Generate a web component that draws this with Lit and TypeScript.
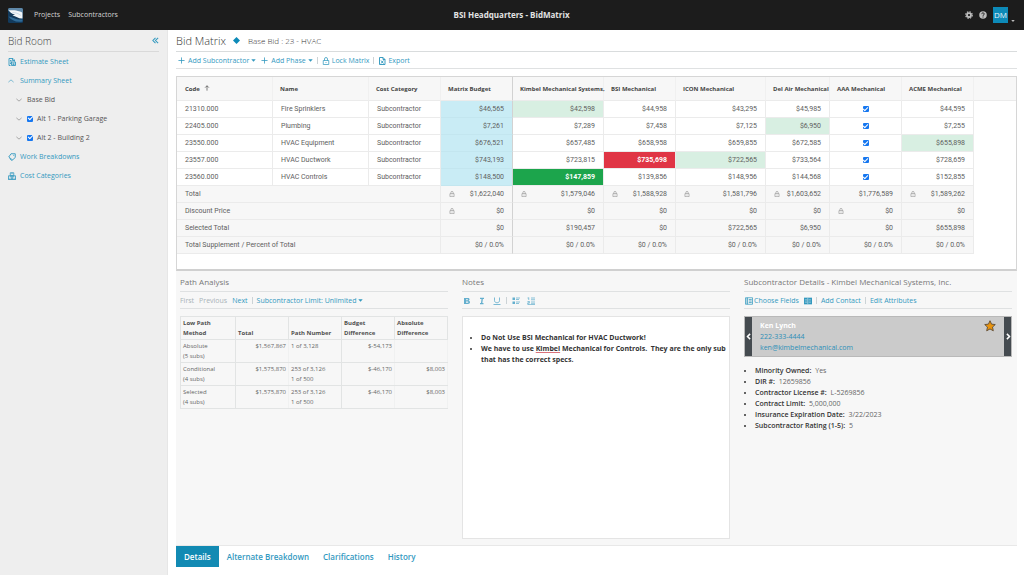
import { LitElement, html, css, svg, nothing, TemplateResult } from "lit";
import { customElement } from "lit/decorators.js";
import { classMap } from "lit/directives/class-map.js";

const icon = (body: TemplateResult, cls = "icon", box = "0 0 16 16") =>
  html`<svg class=${cls} viewBox=${box} aria-hidden="true">${body}</svg>`;

const sheetIcon = svg`<path d="M13 7V4L10 1H2v14h3M9 1v4h4M4 5h3M4 8h4M4 11h2" fill="none" stroke="currentColor" stroke-width="1.8"/><path d="M7 15V8h8v7zM9 10.500h4M9 13h4" fill="none" stroke="currentColor" stroke-width="1.800"/>`;
const exportIcon = svg`<path d="M3 1h7l4 4v10H3zM10 1v4h4" fill="none" stroke="currentColor" stroke-width="1.900"/><path d="M6 7l5 6M11 7l-5 6" stroke="currentColor" stroke-width="1.900"/>`;
const tagIcon = svg`<path d="M6 1.500h8.500V9L9 14 1.500 8z" fill="none" stroke="currentColor" stroke-width="1.800" stroke-linejoin="round"/><path d="M3 11l4 4 2-2" fill="none" stroke="currentColor" stroke-width="1.500"/><circle cx="11.500" cy="4.500" r="1" fill="currentColor"/>`;
const boxesIcon = svg`<path d="M4.500 1.500h7v6h-7zM1 7.500h7v7H1zM8 7.500h7v7H8z" fill="none" stroke="currentColor" stroke-width="1.600"/><path d="M8 1.500v3M4.500 8v3M11.500 8v3M0 14.500h16" stroke="currentColor" stroke-width="1.600"/>`;
const upIcon = svg`<path d="M1 11l7-6 7 6" fill="none" stroke="currentColor" stroke-width="1.600"/>`;
const downIcon = svg`<path d="M1 5l7 6 7-6" fill="none" stroke="currentColor" stroke-width="1.600"/>`;
const collapseIcon = svg`<path d="M8 2L2 8l6 6M14 2L8 8l6 6" fill="none" stroke="currentColor" stroke-width="2.400"/>`;
const plusIcon = svg`<path d="M8 1v14M1 8h14" stroke="currentColor" stroke-width="1.800"/>`;
const lockIcon = svg`<path d="M2.500 7h11v8h-11zM5 7V4a3 3 0 0 1 6 0v3" fill="none" stroke="currentColor" stroke-width="1.500"/><path d="M8 10v2" stroke="currentColor" stroke-width="1.500"/>`;
const caretIcon = svg`<path d="M1 4h14L8 12z" fill="currentColor"/>`;
const sortIcon = svg`<path d="M8 15V2M3 7l5-5 5 5" fill="none" stroke="currentColor" stroke-width="1.800"/>`;
const diamondIcon = svg`<path d="M8 0l8 8-8 8-8-8z" fill="currentColor"/>`;
const gearIcon = svg`<circle cx="8" cy="8" r="4" fill="none" stroke="currentColor" stroke-width="3.500"/><circle cx="8" cy="8" r="6.500" fill="none" stroke="currentColor" stroke-width="2.400" stroke-dasharray="3 2.100"/>`;
const helpIcon = svg`<circle cx="8" cy="8" r="7.500" fill="currentColor"/><path d="M5.500 6.200c0-3.400 5-3.200 5-.2 0 1.800-2.500 1.700-2.500 3.700M8 11v2" fill="none" stroke="#1c1c1c" stroke-width="1.900"/>`;
const logoIcon = svg`<rect width="30" height="30" rx="3" fill="#123a5c"/><path d="M0 3a3 3 0 0 1 3-3h24a3 3 0 0 1 3 3v6L0 5z" fill="#5f88a8"/><path d="M1 4c8 1 14-1 28 5v12C22 22 16 16 9 15l5-2C8 12 4 9 1 4z" fill="#f1f5f8"/><path d="M1 17c9 1 14 7 28 6v4C16 29 7 25 1 17z" fill="#2f6b98"/><path d="M9 9c6 0 12 2 17 6" stroke="#b7cfe0" stroke-width="1.200" fill="none"/>`;
const boldIcon = svg`<path d="M2 2h8c4 0 4 5 1 5.500C15.500 8 15 14 10 14H2zM6 4.500v2h3c1.500 0 1.500-2 0-2zM6 9v2.500h3.500c1.800 0 1.800-2.500 0-2.500z" fill="currentColor" fill-rule="evenodd"/>`;
const italicIcon = svg`<path d="M4 1.500h8v2.500h-2.300l-1 8H11v2.500H4V12h2l1-8H4z" fill="currentColor"/>`;
const underlineIcon = svg`<path d="M3 1v6c0 6 10 6 10 0V1M1 15h14" fill="none" stroke="currentColor" stroke-width="1.700"/>`;
const bulletsIcon = svg`<path d="M1 1h5v5H1zM1 9h5v5H1z" fill="currentColor"/><path d="M8 2h8M8 5h6M8 10h8M8 13h6" stroke="currentColor" stroke-width="1.500"/>`;
const numbersIcon = svg`<path d="M3.500 1v5M1 2h2.500M1 9h4v2.500H1.500V14H5M8 2h8M8 5.500h8M8 10h8M8 13.500h8M1 15.300h15" stroke="currentColor" stroke-width="1.500" fill="none"/>`;
const fieldsIcon = svg`<path d="M1 1.500h14v13H1zM5 1.500v13M7.500 5h6M7.500 8h6M7.500 11h6" fill="none" stroke="currentColor" stroke-width="1.500"/><path d="M2 4h2M2 8h2M2 12h2" stroke="currentColor" stroke-width="1.500"/>`;
const columnsIcon = svg`<path d="M0 1h18v15H0z" fill="currentColor"/><path d="M8.500 2v13M2 6h5M2 11h5M10.500 6h5M10.500 11h5" stroke="#f7f7f7" stroke-width="1.200"/>`;
const starIcon = svg`<path d="M10 1.200l2.600 5.700 6.200.7-4.600 4.200 1.300 6.200L10 14.900 4.500 18l1.300-6.200L1.200 7.600l6.200-.7z" fill="#e8930c" stroke="#5c4a33" stroke-width="1.500" stroke-linejoin="round"/>`;
const prevIcon = svg`<path d="M11 1L4 8l7 7" fill="none" stroke="currentColor" stroke-width="4"/>`;
const nextIcon = svg`<path d="M5 1l7 7-7 7" fill="none" stroke="currentColor" stroke-width="4"/>`;

const base = css`
  * { box-sizing: border-box; }
  button, a, input { font: inherit; }
  button { border: 0; padding: 0; margin: 0; background: none; color: inherit; cursor: pointer; }
  a { color: inherit; text-decoration: none; }
  h1, h2, h3, ul { margin: 0; padding: 0; }
  .icon { width: 8px; height: 8px; flex: none; display: block; }
  .tiny { width: 5px; height: 5px; flex: none; display: block; }
  .check { appearance: none; width: 6px; height: 6px; margin: 0; border-radius: 1px; background: #1677f0; display: grid; place-items: center; flex: none; }
  .check:checked::after { content: ""; width: 4px; height: 2px; border-left: 1px solid #fff; border-bottom: 1px solid #fff; transform: translateY(-1px) rotate(-45deg); }
  .toolbar { display: flex; align-items: center; height: 17px; padding-top: 1px; border-bottom: 1px solid #dfe1e2; color: #3399bf; white-space: nowrap; }
  .tool { display: flex; align-items: center; gap: 2px; }
  .sep { width: 1px; height: 7px; margin: 0 -1px; background: #ccd3d6; flex: none; }
`;

@customElement("top-bar")
export class TopBar extends LitElement {
  static styles = [base, css`
    :host { display: block; }
    .bar { display: grid; grid-template-columns: 1fr auto 1fr; align-items: center; height: 30px; padding: 0 9px 0 8px; background: #1c1c1c; color: #d4d4d4; }
    .left, .right { display: flex; align-items: center; gap: 8px; }
    .right { justify-content: flex-end; gap: 6px; color: #bdbdbd; }
    .logo { width: 15px; height: 15px; margin-right: 3px; }
    .title { font-size: 8px; font-weight: 700; color: #e2e2e2; }
    .user { display: flex; align-items: flex-end; gap: 3px; }
    .avatar { width: 15px; height: 16px; background: #0d8ab8; color: #e6f5fa; font-size: 8px; line-height: 16px; text-align: center; }
    .tiny { width: 4px; height: 4px; }
  `];
  render() {
    return html`<header class="bar">
      <nav class="left">${icon(logoIcon, "logo", "0 0 30 30")}<a href="#projects">Projects</a><a href="#subs">Subcontractors</a></nav>
      <h1 class="title">BSI Headquarters - BidMatrix</h1>
      <div class="right">
        <button aria-label="Settings">${icon(gearIcon)}</button>
        <button aria-label="Help">${icon(helpIcon)}</button>
        <button class="user"><span class="avatar">DM</span>${icon(caretIcon, "tiny")}</button>
      </div>
    </header>`;
  }
}

@customElement("side-nav")
export class SideNav extends LitElement {
  static styles = [base, css`
    :host { display: block; background: #eeeeee; padding: 0 8px; border-right: 1px solid #e6e6e6; }
    .head { display: flex; align-items: center; justify-content: space-between; height: 22px; border-bottom: 1px solid #d9d9d9; color: #3399bf; }
    .title { font-size: 10px; font-weight: 300; color: #444; }
    .fold { width: 7px; height: 7px; display: block; }
    .row { display: flex; align-items: center; gap: 4px; height: 19px; color: #3399bf; }
    .child { padding-left: 8px; color: #555; gap: 5px; }
    .child label { display: flex; align-items: center; gap: 4px; }
    .chev { width: 6px; height: 6px; display: block; }
    .row .wide { width: 8px; display: block; }
    .child button { color: #777; }
  `];
  render() {
    const chev = html`<button aria-label="Expand">${icon(downIcon, "chev")}</button>`;
    return html`
      <div class="head"><h2 class="title">Bid Room</h2><button aria-label="Collapse">${icon(collapseIcon, "fold")}</button></div>
      <nav>
        <a class="row" href="#estimate">${icon(sheetIcon)}Estimate Sheet</a>
        <a class="row" href="#summary"><span class="wide">${icon(upIcon, "chev")}</span>Summary Sheet</a>
        <div class="row child">${chev}<a href="#base">Base Bid</a></div>
        <div class="row child">${chev}<label><input class="check" type="checkbox" checked>Alt 1 - Parking Garage</label></div>
        <div class="row child">${chev}<label><input class="check" type="checkbox" checked>Alt 2 - Building 2</label></div>
        <a class="row" href="#work">${icon(tagIcon)}Work Breakdowns</a>
        <a class="row" href="#cost">${icon(boxesIcon)}Cost Categories</a>
      </nav>`;
  }
}

type Mark = "low" | "bad" | "good";
interface Cell { v?: string; mark?: Mark; lock?: boolean; check?: boolean; }
const c = (v: string, mark?: Mark): Cell => ({ v, mark });
const k = (v: string): Cell => ({ v, lock: true });
const tick: Cell = { check: true };

const vendors = ["Matrix Budget", "Kimbel Mechanical Systems,", "BSI Mechanical", "ICON Mechanical", "Del Air Mechanical", "AAA Mechanical", "ACME Mechanical"];
const lines: { code: string; name: string; cells: Cell[] }[] = [
  { code: "21310.000", name: "Fire Sprinklers", cells: [c("$46,565"), c("$42,598", "low"), c("$44,958"), c("$43,295"), c("$45,985"), tick, c("$44,595")] },
  { code: "22405.000", name: "Plumbing", cells: [c("$7,261"), c("$7,289"), c("$7,458"), c("$7,125"), c("$6,950", "low"), tick, c("$7,255")] },
  { code: "23550.000", name: "HVAC Equipment", cells: [c("$676,521"), c("$657,485"), c("$658,958"), c("$659,855"), c("$672,585"), tick, c("$655,898", "low")] },
  { code: "23557.000", name: "HVAC Ductwork", cells: [c("$743,193"), c("$723,815"), c("$735,698", "bad"), c("$722,565", "low"), c("$733,564"), tick, c("$728,659")] },
  { code: "23560.000", name: "HVAC Controls", cells: [c("$148,500"), c("$147,859", "good"), c("$139,856"), c("$148,956"), c("$144,568"), tick, c("$152,855")] },
];
const zero = "$0 / 0.0%";
const totals: { name: string; cells: Cell[] }[] = [
  { name: "Total", cells: [k("$1,622,040"), k("$1,579,046"), k("$1,588,928"), k("$1,581,796"), k("$1,603,652"), c("$1,776,589"), k("$1,589,262")] },
  { name: "Discount Price", cells: [k("$0"), c("$0"), c("$0"), c("$0"), c("$0"), k("$0"), c("$0")] },
  { name: "Selected Total", cells: [c("$0"), c("$190,457"), c("$0"), c("$722,565"), c("$6,950"), c("$0"), c("$655,898")] },
  { name: "Total Supplement / Percent of Total", cells: vendors.map(() => c(zero)) },
];

@customElement("bid-grid")
export class BidGrid extends LitElement {
  static styles = [base, css`
    :host { display: block; border: 1px solid #d6d6d6; border-bottom: 2px solid #d0d0d0; background: #fff; padding-bottom: 15px; overflow: hidden; font-family: Roboto, sans-serif; }
    table { width: 100%; table-layout: fixed; border-collapse: separate; border-spacing: 0; color: #606060; }
    .c-wide { width: 96px; }
    .c-mid { width: 72px; }
    .c-first { width: 91px; }
    .c-icon { width: 90px; }
    .c-del { width: 64px; }
    th, td { padding: 0 8px; white-space: nowrap; border-right: 1px solid #ebebeb; border-bottom: 1px solid #ebebeb; font-weight: 400; text-align: left; }
    thead th, thead td { height: 24px; background: #f7f7f7; font-family: "Open Sans", "Noto Sans", sans-serif; font-size: 6px; font-weight: 700; color: #444; padding: 0 0 0 7px; border-right-color: #f0f0f0; }
    thead th:first-child { padding-left: 8px; }
    tbody td, tbody th, tfoot td, tfoot th { height: 17px; }
    .num { text-align: right; }
    tfoot .num, tfoot th { background: #f7f7f7; }
    .budget, thead .budget { border-right-color: #d2d2d2; }
    tbody .budget { background: #c9ecf5; border-bottom-color: #c3e6ef; }
    .low { background: #d8efe2; }
    .bad { background: #e03545; color: #fff; font-weight: 700; }
    .good { background: #1ca54c; color: #fff; font-weight: 700; }
    .fill { border-right: 0; border-bottom: 0; }
    thead .fill { border-bottom: 1px solid #ebebeb; }
    .cell { display: flex; align-items: center; justify-content: space-between; }
    .lock { width: 6px; height: 6px; color: #888; }
    .mid .check { margin: 0 auto; }
    .sort { display: inline-block; width: 6px; height: 6px; margin-left: 4px; }
  `];
  private cell(x: Cell, i: number) {
    const cls = { num: !x.check, mid: !!x.check, budget: i === 0, low: x.mark === "low", bad: x.mark === "bad", good: x.mark === "good" };
    return html`<td class=${classMap(cls)}>${x.check
      ? html`<input class="check" type="checkbox" checked aria-label="Include ${vendors[i]}">`
      : x.lock ? html`<div class="cell">${icon(lockIcon, "lock")}<span>${x.v}</span></div>` : x.v}</td>`;
  }
  render() {
    return html`<table>
      <colgroup><col class="c-wide"><col class="c-wide"><col class="c-mid"><col class="c-mid"><col class="c-first"><col class="c-mid"><col class="c-icon"><col class="c-del"><col class="c-mid"><col class="c-mid"><col></colgroup>
      <thead><tr><th>Code${icon(sortIcon, "sort")}</th><th>Name</th><th>Cost Category</th>${vendors.map((v, i) => html`<th class=${i ? "" : "budget"}>${v}</th>`)}<td class="fill"></td></tr></thead>
      <tbody>${lines.map(l => html`<tr><td>${l.code}</td><td>${l.name}</td><td>Subcontractor</td>${l.cells.map((x, i) => this.cell(x, i))}<td class="fill"></td></tr>`)}</tbody>
      <tfoot>${totals.map(t => html`<tr><th colspan="3">${t.name}</th>${t.cells.map((x, i) => this.cell(x, i))}<td class="fill"></td></tr>`)}</tfoot>
    </table>`;
  }
}

const panel = css`
  .title { font-size: 8px; line-height: 11px; padding: 5px 0 4px; font-weight: 400; color: #777; border-bottom: 1px solid #dfe1e2; white-space: nowrap; }
`;

@customElement("path-analysis")
export class PathAnalysis extends LitElement {
  static styles = [base, panel, css`
    :host { display: block; min-width: 0; }
    .toolbar { gap: 5px; }
    .tool { gap: 1px; }
    .off { color: #a9b3b7; }
    table { width: 100%; margin-top: 7px; table-layout: fixed; border-collapse: collapse; font-size: 6px; line-height: 10px; color: #666; }
    th, td { border: 1px solid #e2e4e4; padding: 1px 2px; text-align: left; vertical-align: top; white-space: nowrap; }
    th { vertical-align: bottom; font-weight: 700; color: #505050; }
    .num { text-align: right; border-right-color: #f0f1f1; }
    .first { width: 55px; }
  `];
  render() {
    const rows = [
      ["Absolute", "(5 subs)", "$1,567,867", "1 of 3,128", "", "$-54,173", ""],
      ["Conditional", "(4 subs)", "$1,575,870", "253 of 3,126", "1 of 500", "$-46,170", "$8,003"],
      ["Selected", "(4 subs)", "$1,575,870", "253 of 3,126", "1 of 500", "$-46,170", "$8,003"],
    ];
    return html`<h3 class="title">Path Analysis</h3>
      <div class="toolbar"><button class="off" disabled>First</button><button class="off" disabled>Previous</button><button>Next</button><span class="sep"></span>
      <button class="tool">Subcontractor Limit: Unlimited${icon(caretIcon, "tiny")}</button></div>
      <table><thead><tr><th class="first">Low Path<br>Method</th><th>Total</th><th>Path Number</th><th>Budget<br>Difference</th><th>Absolute<br>Difference</th></tr></thead>
      <tbody>${rows.map(r => html`<tr><td>${r[0]}<br>${r[1]}</td><td class="num">${r[2]}</td><td>${r[3]}${r[4] ? html`<br>${r[4]}` : nothing}</td><td class="num">${r[5]}</td><td class="num">${r[6]}</td></tr>`)}</tbody></table>`;
  }
}

@customElement("notes-panel")
export class NotesPanel extends LitElement {
  static styles = [base, panel, css`
    :host { display: flex; flex-direction: column; min-width: 0; }
    .toolbar { gap: 7px; padding-left: 1px; color: #64afce; }
    .sep { margin: 0 -2px; }
    .editor { flex: 1; margin: 7px 0 6px; border: 1px solid #e4e4e4; background: #fff; padding: 15px 0 8px 18px; line-height: 11px; font-weight: 700; color: #333; }
    .editor ul { list-style: disc; }
    .typo { text-decoration: underline #d9737b; }
  `];
  render() {
    return html`<h3 class="title">Notes</h3>
      <div class="toolbar"><button aria-label="Bold">${icon(boldIcon)}</button><button aria-label="Italic">${icon(italicIcon)}</button><button aria-label="Underline">${icon(underlineIcon)}</button><span class="sep"></span><button aria-label="Bulleted list">${icon(bulletsIcon)}</button><button aria-label="Numbered list">${icon(numbersIcon)}</button></div>
      <div class="editor" role="textbox" aria-label="Notes" aria-multiline="true" contenteditable="true" spellcheck="false"><ul>
        <li>Do Not Use BSI Mechanical for HVAC Ductwork!</li>
        <li>We have to use <span class="typo">Kimbel</span> Mechanical for Controls.&nbsp; They are the only sub that has the correct specs.</li></ul></div>`;
  }
}

@customElement("sub-details")
export class SubDetails extends LitElement {
  static styles = [base, panel, css`
    :host { display: block; min-width: 0; }
    .toolbar { gap: 5px; padding-left: 1px; }
    .tool { gap: 1px; }
    .card { display: flex; margin-top: 7px; background: #cbcbcb; border: 1px solid #b9b9b9; line-height: 11px; color: #2b8fb8; }
    .side { width: 7px; background: #454b50; color: #fff; display: grid; place-items: center; }
    .side svg { width: 6px; height: 9px; }
    .who { flex: 1; display: flex; flex-direction: column; align-items: flex-start; padding: 3px 8px; }
    .name { color: #fff; font-weight: 700; }
    .star { width: 12px; height: 12px; margin: 3px 8px 0 0; }
    .facts { list-style: disc; margin-top: 8px; padding-left: 11px; line-height: 11px; color: #333; }
    b { font-weight: 600; color: #333; margin-right: 2px; }
    .facts span { color: #666; }
  `];
  render() {
    const facts = [["Minority Owned:", "Yes"], ["DIR #:", "12659856"], ["Contractor License #:", "L-5269856"], ["Contract Limit:", "5,000,000"], ["Insurance Expiration Date:", "3/22/2023"], ["Subcontractor Rating (1-5):", "5"]];
    return html`<h3 class="title">Subcontractor Details - Kimbel Mechanical Systems, Inc.</h3>
      <div class="toolbar"><button class="tool">${icon(fieldsIcon)}Choose Fields</button><button aria-label="Columns">${icon(columnsIcon, "icon", "0 0 18 17")}</button><span class="sep"></span><button>Add Contact</button><span class="sep"></span><button>Edit Attributes</button></div>
      <div class="card"><button class="side" aria-label="Previous contact">${icon(prevIcon)}</button>
        <div class="who"><span class="name">Ken Lynch</span><a href="tel:2223334444">222-333-4444</a><a href="mailto:ken@kimbelmechanical.com">ken@kimbelmechanical.com</a></div>
        ${icon(starIcon, "star", "0 0 20 20")}<button class="side" aria-label="Next contact">${icon(nextIcon)}</button></div>
      <ul class="facts">${facts.map(f => html`<li><b>${f[0]}</b> <span>${f[1]}</span></li>`)}</ul>`;
  }
}

@customElement("app-root")
export class AppRoot extends LitElement {
  static styles = [base, css`
    :host { display: flex; flex-direction: column; min-height: 100vh; background: #fff; font-family: "Open Sans", "Noto Sans", sans-serif; font-size: 7px; line-height: 10px; }
    .body { flex: 1; display: grid; grid-template-columns: 168px minmax(0, 1fr); }
    main { display: flex; flex-direction: column; padding: 0 7px 8px 8px; }
    .head { display: flex; align-items: center; gap: 7px; height: 22px; border-bottom: 1px solid #d9dcdd; color: #0d8ab8; }
    .head .title { font-size: 11px; font-weight: 300; color: #333; line-height: 15px; }
    .head .sub { font-size: 8px; font-weight: 300; color: #333; margin-left: 1px; }
    .toolbar { gap: 5px; padding-left: 2px; }
    .dia { width: 7px; height: 7px; }
    .plus { width: 7px; height: 7px; margin-right: 1px; }
    bid-grid { margin-top: 7px; }
    .lower { flex: 1; display: grid; grid-template-columns: repeat(3, minmax(0, 1fr)); gap: 14px; padding: 0 5px 0 4px; background: #f7f7f7; }
    .tabs { display: flex; border-top: 1px solid #e8e8e8; color: #3399bf; font-size: 8px; font-weight: 600; }
    .tab { padding: 0 7px; height: 21px; }
    .on { padding: 0 8px; margin-right: 1px; background: #128ab3; color: #fff; }
  `];
  render() {
    return html`<top-bar></top-bar>
      <div class="body"><side-nav></side-nav>
        <main>
          <div class="head"><h2 class="title">Bid Matrix</h2>${icon(diamondIcon, "dia")}<span class="sub">Base Bid : 23 - HVAC</span></div>
          <div class="toolbar">
            <button class="tool">${icon(plusIcon, "plus")}Add Subcontractor${icon(caretIcon, "tiny")}</button>
            <button class="tool">${icon(plusIcon, "plus")}Add Phase${icon(caretIcon, "tiny")}</button>
            <span class="sep"></span><button class="tool">${icon(lockIcon)}Lock Matrix</button>
            <span class="sep"></span><button class="tool">${icon(exportIcon)}Export</button>
          </div>
          <bid-grid></bid-grid>
          <section class="lower"><path-analysis></path-analysis><notes-panel></notes-panel><sub-details></sub-details></section>
          <nav class="tabs"><button class="tab on">Details</button><button class="tab">Alternate Breakdown</button><button class="tab">Clarifications</button><button class="tab">History</button></nav>
        </main>
      </div>`;
  }
}
